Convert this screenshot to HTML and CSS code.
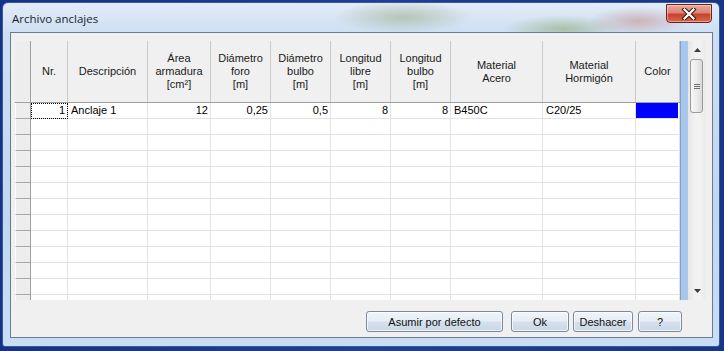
FILE: index.html
```html
<!DOCTYPE html>
<html lang="es">
<head>
<meta charset="utf-8">
<title>Archivo anclajes</title>
<link rel="stylesheet" href="styles.css">
</head>
<body>
<div class="window">
  <div class="titlebar">
    <span class="title">Archivo anclajes</span>
    <button class="close" aria-label="Cerrar">
      <svg width="16" height="12" viewBox="0 0 16 12">
        <path d="M3.5 1.5 L12.5 10.5 M12.5 1.5 L3.5 10.5" stroke="#3b1610" stroke-width="4.2" stroke-linecap="square" fill="none"/>
        <path d="M3.5 1.5 L12.5 10.5 M12.5 1.5 L3.5 10.5" stroke="#ffffff" stroke-width="2.2" stroke-linecap="square" fill="none"/>
      </svg>
    </button>
  </div>
  <div class="client">
    <div class="grid">
      <div class="table">
        <div class="row head">
          <div class="rh"></div>
          <div class="c w-nr">Nr.</div>
          <div class="c w-desc">Descripción</div>
          <div class="c w-area">Área<br>armadura<br>[cm²]</div>
          <div class="c w-60">Diámetro<br>foro<br>[m]</div>
          <div class="c w-60">Diámetro<br>bulbo<br>[m]</div>
          <div class="c w-60">Longitud<br>libre<br>[m]</div>
          <div class="c w-60">Longitud<br>bulbo<br>[m]</div>
          <div class="c w-acero">Material<br>Acero</div>
          <div class="c w-horm">Material<br>Hormigón</div>
          <div class="c w-color">Color</div>
        </div>
        <div class="body">
          <div class="row">
            <div class="rh"></div>
            <div class="c w-nr r focus">1</div>
            <div class="c w-desc l">Anclaje 1</div>
            <div class="c w-area r">12</div>
            <div class="c w-60 r">0,25</div>
            <div class="c w-60 r">0,5</div>
            <div class="c w-60 r">8</div>
            <div class="c w-60 r">8</div>
            <div class="c w-acero l">B450C</div>
            <div class="c w-horm l">C20/25</div>
            <div class="c w-color"><span class="swatch"></span></div>
          </div>
          <div class="row"><div class="rh"></div><div class="c w-nr"></div><div class="c w-desc"></div><div class="c w-area"></div><div class="c w-60"></div><div class="c w-60"></div><div class="c w-60"></div><div class="c w-60"></div><div class="c w-acero"></div><div class="c w-horm"></div><div class="c w-color"></div></div>
          <div class="row"><div class="rh"></div><div class="c w-nr"></div><div class="c w-desc"></div><div class="c w-area"></div><div class="c w-60"></div><div class="c w-60"></div><div class="c w-60"></div><div class="c w-60"></div><div class="c w-acero"></div><div class="c w-horm"></div><div class="c w-color"></div></div>
          <div class="row"><div class="rh"></div><div class="c w-nr"></div><div class="c w-desc"></div><div class="c w-area"></div><div class="c w-60"></div><div class="c w-60"></div><div class="c w-60"></div><div class="c w-60"></div><div class="c w-acero"></div><div class="c w-horm"></div><div class="c w-color"></div></div>
          <div class="row"><div class="rh"></div><div class="c w-nr"></div><div class="c w-desc"></div><div class="c w-area"></div><div class="c w-60"></div><div class="c w-60"></div><div class="c w-60"></div><div class="c w-60"></div><div class="c w-acero"></div><div class="c w-horm"></div><div class="c w-color"></div></div>
          <div class="row"><div class="rh"></div><div class="c w-nr"></div><div class="c w-desc"></div><div class="c w-area"></div><div class="c w-60"></div><div class="c w-60"></div><div class="c w-60"></div><div class="c w-60"></div><div class="c w-acero"></div><div class="c w-horm"></div><div class="c w-color"></div></div>
          <div class="row"><div class="rh"></div><div class="c w-nr"></div><div class="c w-desc"></div><div class="c w-area"></div><div class="c w-60"></div><div class="c w-60"></div><div class="c w-60"></div><div class="c w-60"></div><div class="c w-acero"></div><div class="c w-horm"></div><div class="c w-color"></div></div>
          <div class="row"><div class="rh"></div><div class="c w-nr"></div><div class="c w-desc"></div><div class="c w-area"></div><div class="c w-60"></div><div class="c w-60"></div><div class="c w-60"></div><div class="c w-60"></div><div class="c w-acero"></div><div class="c w-horm"></div><div class="c w-color"></div></div>
          <div class="row"><div class="rh"></div><div class="c w-nr"></div><div class="c w-desc"></div><div class="c w-area"></div><div class="c w-60"></div><div class="c w-60"></div><div class="c w-60"></div><div class="c w-60"></div><div class="c w-acero"></div><div class="c w-horm"></div><div class="c w-color"></div></div>
          <div class="row"><div class="rh"></div><div class="c w-nr"></div><div class="c w-desc"></div><div class="c w-area"></div><div class="c w-60"></div><div class="c w-60"></div><div class="c w-60"></div><div class="c w-60"></div><div class="c w-acero"></div><div class="c w-horm"></div><div class="c w-color"></div></div>
          <div class="row"><div class="rh"></div><div class="c w-nr"></div><div class="c w-desc"></div><div class="c w-area"></div><div class="c w-60"></div><div class="c w-60"></div><div class="c w-60"></div><div class="c w-60"></div><div class="c w-acero"></div><div class="c w-horm"></div><div class="c w-color"></div></div>
          <div class="row"><div class="rh"></div><div class="c w-nr"></div><div class="c w-desc"></div><div class="c w-area"></div><div class="c w-60"></div><div class="c w-60"></div><div class="c w-60"></div><div class="c w-60"></div><div class="c w-acero"></div><div class="c w-horm"></div><div class="c w-color"></div></div>
          <div class="row"><div class="rh"></div><div class="c w-nr"></div><div class="c w-desc"></div><div class="c w-area"></div><div class="c w-60"></div><div class="c w-60"></div><div class="c w-60"></div><div class="c w-60"></div><div class="c w-acero"></div><div class="c w-horm"></div><div class="c w-color"></div></div>
        </div>
      </div>
      <div class="stripe"></div>
      <div class="scrollbar">
        <div class="sb-btn">
          <svg width="7" height="4" viewBox="0 0 7 4"><path d="M0 4 L3.5 0 L7 4 Z" fill="#3c3c3c"/></svg>
        </div>
        <div class="sb-track">
          <div class="thumb">
            <span class="grip"></span><span class="grip"></span><span class="grip"></span>
          </div>
        </div>
        <div class="sb-btn">
          <svg width="7" height="4" viewBox="0 0 7 4"><path d="M0 0 L7 0 L3.5 4 Z" fill="#3c3c3c"/></svg>
        </div>
      </div>
    </div>
    <div class="buttons">
      <button class="btn b-def">Asumir por defecto</button>
      <button class="btn b-ok">Ok</button>
      <button class="btn b-undo">Deshacer</button>
      <button class="btn b-help">?</button>
    </div>
  </div>
</div>
</body>
</html>
```
FILE: styles.css
```css
* { box-sizing: border-box; }

html, body {
  margin: 0;
  padding: 0;
}

body {
  width: 724px;
  height: 351px;
  overflow: hidden;
  background: linear-gradient(to right, #14328a, #1c3f9c 50%, #173686);
  font-family: "Liberation Sans", Arial, sans-serif;
  font-size: 11px;
  color: #000;
  padding: 2px 4px 4px 2px;
}

.window {
  width: 718px;
  height: 345px;
  border-radius: 6px 6px 3px 3px;
  border: 1px solid #3c5a8c;
  background:
    radial-gradient(ellipse 70px 16px at 400px 14px, rgba(150, 170, 130, 0.55), rgba(150, 170, 130, 0)),
    radial-gradient(ellipse 60px 14px at 560px 26px, rgba(140, 165, 110, 0.55), rgba(140, 165, 110, 0)),
    radial-gradient(ellipse 50px 14px at 635px 18px, rgba(190, 120, 110, 0.45), rgba(190, 120, 110, 0)),
    linear-gradient(to bottom, #e2ecf8 0, #cddff3 30px, #c0d7f1 60%, #c8def5 100%);
  padding: 0 6px 8px 7px;
  display: flex;
  flex-direction: column;
}

.titlebar {
  height: 29px;
  display: flex;
  justify-content: space-between;
  align-items: flex-start;
}

.title {
  font-family: "Open Sans", "Liberation Sans", sans-serif;
  font-size: 11.5px;
  color: #1e1e1e;
  padding: 9px 0 0 2px;
  line-height: 14px;
}

.close {
  width: 46px;
  height: 19px;
  margin: 1px 1px 0 0;
  padding: 0;
  border: 1px solid #6b2318;
  border-radius: 0 0 4px 4px;
  background: linear-gradient(to bottom, #e9a99c 0, #dc8574 45%, #c7432f 55%, #d6664d 100%);
  box-shadow: inset 0 0 0 1px rgba(255, 220, 210, 0.5);
  display: flex;
  align-items: center;
  justify-content: center;
}

.client {
  flex: 1;
  border: 1px solid #6a7b8e;
  background: #f0f0f0;
  padding: 8px 6px 0 4px;
  display: flex;
  flex-direction: column;
}

.grid {
  height: 259px;
  display: flex;
  background: #fff;
}

.table {
  width: 665px;
  display: flex;
  flex-direction: column;
}

.row {
  display: flex;
  height: 16px;
  flex: none;
}

.row.head {
  height: 62px;
  background: #f0f0f0;
  border-bottom: 1px solid #a0a0a0;
}

.body {
  height: 197px;
  overflow: hidden;
}

.rh {
  width: 16px;
  flex: none;
  background: #ededed;
  border-right: 1px solid #a0a0a0;
  border-bottom: 1px solid #a8a8a8;
  border-left: 1px solid #ffffff;
}

.head .rh {
  border-bottom: none;
  border-left: none;
}

.c {
  flex: none;
  border-right: 1px solid #e3e3e3;
  border-bottom: 1px solid #e3e3e3;
  line-height: 15px;
  white-space: nowrap;
  overflow: hidden;
}

.head .c {
  border-right: 1px solid #cacaca;
  border-bottom: none;
  display: flex;
  align-items: center;
  justify-content: center;
  text-align: center;
  line-height: 13px;
  color: #1a1a1a;
}

.c.r { text-align: right; padding-right: 2px; }
.c.l { text-align: left; padding-left: 3px; }

.c.focus {
  outline: 1px dotted #000;
  outline-offset: -1px;
}

.w-nr { width: 37px; }
.w-desc { width: 80px; }
.w-area { width: 63px; }
.w-60 { width: 60px; }
.w-acero { width: 92px; }
.w-horm { width: 93px; }
.w-color { width: 44px; }

.w-color .swatch {
  display: block;
  width: 42px;
  height: 15px;
  background: #0000ff;
}

.stripe {
  width: 8px;
  background: #a9c7ea;
  border-left: 1px solid #7f9fcf;
}

.scrollbar {
  width: 18px;
  display: flex;
  flex-direction: column;
  background: linear-gradient(to right, #e6e6e6, #f2f2f2 40%, #f2f2f2 70%, #e9e9e9);
}

.sb-btn {
  height: 18px;
  display: flex;
  align-items: center;
  justify-content: center;
}

.sb-track {
  flex: 1;
  padding: 0 3px 0 2px;
}

.thumb {
  height: 54px;
  border: 1px solid #9b9b9b;
  border-radius: 3px;
  background: linear-gradient(to right, #f6f6f6, #ececec 50%, #dadada);
  display: flex;
  flex-direction: column;
  align-items: center;
  justify-content: center;
  gap: 1px;
}

.grip {
  width: 6px;
  height: 1px;
  background: #6e6e6e;
}

.buttons {
  display: flex;
  justify-content: flex-end;
  padding: 11px 24px 0 0;
}

.btn {
  height: 21px;
  padding: 0;
  font-family: "Liberation Sans", Arial, sans-serif;
  font-size: 11px;
  color: #111;
  border: 1px solid #7a8ba0;
  border-radius: 3px;
  background: linear-gradient(to bottom, #f1f5fa 0, #e6edf5 48%, #d5e0ec 52%, #cbd7e5 100%);
  box-shadow: inset 0 0 0 1px rgba(255, 255, 255, 0.7);
}

.b-def { width: 137px; }
.b-ok { width: 58px; margin-left: 8px; }
.b-undo { width: 60px; margin-left: 4px; }
.b-help { width: 44px; margin-left: 5px; }
```
